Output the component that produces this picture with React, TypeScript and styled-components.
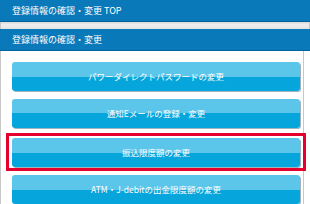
import React from "react";
import styled, { createGlobalStyle } from "styled-components";

const Global = createGlobalStyle`
  html, body { margin: 0; padding: 0; background: #fff; }
  body { font-family: "Noto Sans CJK JP", "Noto Sans", sans-serif; }
`;

const Page = styled.div`
  width: 310px;
  height: 204px;
  overflow: hidden;
  background: #fff;
  display: flex;
  flex-direction: column;
`;

const Header = styled.div`
  height: 21px;
  background: #0a79b9;
  border-bottom: 1px solid #03619a;
  color: #fff;
  font-size: 9px;
  line-height: 21px;
  padding-left: 12px;
  box-sizing: content-box;
`;

const Divider = styled.div`
  height: 10px;
  background: linear-gradient(#d8d8d8, #efefef 40%, #e3e3e3);
  border-left: 1px solid #c8c8c8;
  border-right: 1px solid #c8c8c8;
`;

const Content = styled.div`
  flex: 1;
  width: 304px;
  border-left: 1px solid #c8c8c8;
  border-right: 1px solid #c8c8c8;
  padding: 11px 0 0 11px;
  box-sizing: border-box;
  display: flex;
  flex-direction: column;
  gap: 8px;
`;

const Slot = styled.div<{ $active?: boolean }>`
  position: relative;
  width: 289px;
  margin-top: ${(p) => (p.$active ? "2px" : "0")};
`;

const Button = styled.div`
  height: 29px;
  border-radius: 3px;
  background: linear-gradient(#5cc5ea 0%, #5cc5ea 50%, #06a6dc 50%, #06a6dc 100%);
  box-shadow: 1px 1px 0 #9fb4c0;
  color: #fff;
  font-size: 8.5px;
  line-height: 29px;
  text-align: center;
  width: 288px;
`;

const Highlight = styled.div`
  position: absolute;
  left: -6px;
  top: -5px;
  right: -5px;
  bottom: -4px;
  border: 3px solid #e5002d;
  pointer-events: none;
`;

const items = [
  "パワーダイレクトパスワードの変更",
  "通知Eメールの登録・変更",
  "振込限度額の変更",
  "ATM・J-debitの出金限度額の変更",
];

export default function App() {
  return (
    <Page>
      <Global />
      <Header>登録情報の確認・変更 TOP</Header>
      <Divider />
      <Header>登録情報の確認・変更</Header>
      <Content>
        {items.map((t, i) => (
          <Slot key={t} $active={i === 2}>
            <Button>{t}</Button>
            {i === 2 && <Highlight />}
          </Slot>
        ))}
      </Content>
    </Page>
  );
}
